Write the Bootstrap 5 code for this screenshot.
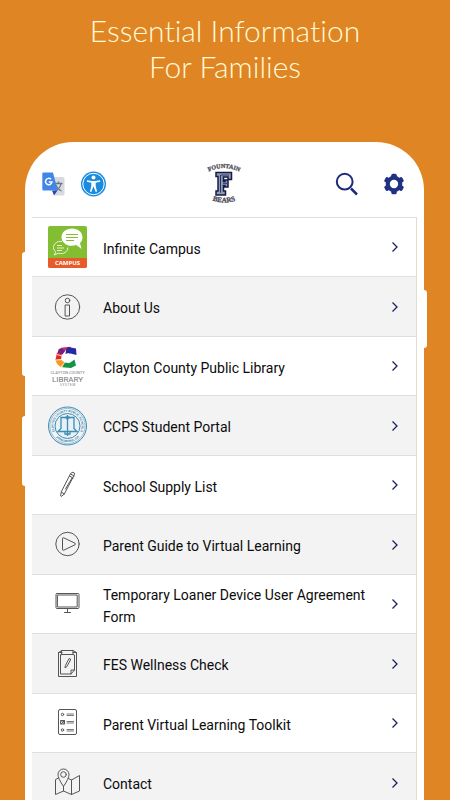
<!DOCTYPE html>
<html lang="en">
<head>
<meta charset="utf-8">
<meta name="viewport" content="width=device-width, initial-scale=1">
<title>Essential Information For Families</title>
<link href="https://cdn.jsdelivr.net/npm/bootstrap@5.3.0/dist/css/bootstrap.min.css" rel="stylesheet">
<style>
  body { background: #e08524; font-family: Roboto, "Liberation Sans", sans-serif; }
  .promo-title { font-family: Lato, "Open Sans", sans-serif; font-weight: 300; font-size: 30px; line-height: 36px; font-variant-ligatures: none; color: #fffbd8; padding: 12px 0 58px; margin: 0; }
  .phone { background: #fff; border-radius: 48px 48px 0 0; margin: 0 26px 0 25px; padding: 0 7px; }
  .side-key { position: absolute; width: 4px; background: #fff; }
  .key-a { left: -3px; top: 110px; height: 124px; border-radius: 3px 0 0 3px; }
  .key-b { left: -3px; top: 274px; height: 70px; border-radius: 3px 0 0 3px; }
  .key-c { right: -3px; top: 148px; height: 58px; border-radius: 0 3px 3px 0; }
  .app-bar { height: 75px; padding: 9px 12px 0 10px; }
  .app-bar .btn { line-height: 0; }
  .menu-list { border-right: 1px solid #e3ddd0; }
  .menu-row { min-height: 59px; padding: 0 17px 0 16px; border-top: 1px solid #dfdfe1; color: #0c0c0c; gap: 16px; font-size: 14px; line-height: 22px; }
  .menu-row:nth-child(even) { background: #f3f3f4; min-height: 60px; }
  .menu-row:hover { color: #0c0c0c; }
  .menu-row .label { padding-top: 3px; }
  .line-art { fill: none; stroke: #555; stroke-width: 1; stroke-linejoin: round; stroke-linecap: round; }
  svg { flex: none; display: block; }
</style>
<script src="https://cdn.jsdelivr.net/npm/bootstrap@5.3.0/dist/js/bootstrap.bundle.min.js"></script>
</head>
<body>
<svg width="0" height="0" class="position-absolute" aria-hidden="true">
  <symbol id="chev" viewBox="0 0 8 12"><path d="M1.500 1.500 6 6 1.500 10.500" fill="none" stroke="#1c2160" stroke-width="1.300"/></symbol>
</svg>
<h1 class="promo-title text-center">Essential Information<br>For Families</h1>
<main class="phone position-relative">
  <span class="side-key key-a"></span><span class="side-key key-b"></span><span class="side-key key-c"></span>
  <header class="app-bar d-flex align-items-center">
    <div class="d-flex align-items-center flex-fill w-50 gap-3">
      <button class="btn p-0 border-0" aria-label="Translate">
        <svg width="23" height="25" viewBox="0 0 23 25"><path d="M8 5h13a1.500 1.500 0 0 1 1.500 1.500V22a1.500 1.500 0 0 1-1.500 1.500h-8z" fill="#d9dadf"/><path d="M12.500 11.500h8M16.500 9.500v2M19 11.500c-.5 3.500-3 6-5.500 7.500M14 13c1 2.500 3 5 5.500 6" fill="none" stroke="#6c7684" stroke-width="1.300"/><path d="M10 18.500h5.500L12 23.500z" fill="#2a45ae"/><path d="M1.500.5H11l4.700 18H1.500A1.300 1.300 0 0 1 .3 17.200V1.700A1.300 1.300 0 0 1 1.500.5z" fill="#4285e8"/><path d="M9 7.300a3.200 3.200 0 1 0 .9 2.700H6.800" fill="none" stroke="#fff" stroke-width="1.500"/></svg>
      </button>
      <button class="btn p-0 border-0" aria-label="Accessibility">
        <svg width="26" height="26" viewBox="0 0 26 26"><circle cx="12.500" cy="13" r="12.500" fill="#1b8be0"/><circle cx="12.500" cy="13" r="10.700" fill="none" stroke="#fff" stroke-width="1"/><circle cx="12.500" cy="6.500" r="2" fill="#fff"/><path d="M6 9.200 11 10h3l5-.8.2 1.500-4.500 1v3.500l1.400 5.300-1.400.4-2-5.200h-.4l-2 5.200-1.400-.4 1.400-5.300v-3.500l-4.500-1z" fill="#fff"/></svg>
      </button>
    </div>
    <svg width="36" height="42" viewBox="0 0 36 42" role="img" aria-label="Fountain Bears">
      <path id="arcTop" d="M2 9Q18 1 34 9" fill="none"/><path id="arcBot" d="M5 37Q18 42 31 37" fill="none"/>
      <g font-family="Liberation Serif, serif" font-weight="700" fill="#4b4d54" text-anchor="middle" stroke="#4b4d54" stroke-width=".3"><text font-size="6"><textPath href="#arcTop" startOffset="50%">FOUNTAIN</textPath></text><text font-size="7"><textPath href="#arcBot" startOffset="50%">BEARS</textPath></text></g>
      <path d="M10 9.500h15.500v7h-3.500v-2.500h-4.500v4.500h1.500v-1.500h3v7h-3V22.500h-1.500v5.500h2v4H10v-4h2V13.500h-2z" fill="#929cae" stroke="#171b46" stroke-width="1.500"/><path d="M14.500 12V29.500M15 12h8M17 20.300h4" stroke="#243473" stroke-width="1" fill="none"/>
    </svg>
    <div class="d-flex align-items-center justify-content-end flex-fill w-50">
      <button class="btn p-0 border-0 me-4" aria-label="Search">
        <svg width="24" height="24" viewBox="0 0 24 24"><circle cx="9.700" cy="9.700" r="7.900" fill="none" stroke="#1c2a78" stroke-width="2"/><path d="m16 16.500 6 6" stroke="#1c2a78" stroke-width="2.500"/></svg>
      </button>
      <button class="btn p-0 border-0" aria-label="Settings">
        <svg width="22" height="22" viewBox="0 0 22 22"><g fill="#1f3180"><circle cx="11" cy="11" r="8.300"/><g id="teeth"><rect x="8.300" y=".7" width="5.400" height="20.600" rx="1.500"/><rect x="8.300" y=".7" width="5.400" height="20.600" rx="1.500" transform="rotate(60 11 11)"/><rect x="8.300" y=".7" width="5.400" height="20.600" rx="1.500" transform="rotate(120 11 11)"/></g></g><circle cx="11" cy="11" r="4.200" fill="#fff"/></svg>
      </button>
    </div>
  </header>
  <nav class="menu-list" aria-label="Information">
    <a href="#" class="menu-row d-flex align-items-center text-decoration-none">
      <svg width="39" height="42" viewBox="0 0 39 42"><rect width="39" height="42" rx="2" fill="#82bd32"/><path d="M0 32h39v8a2 2 0 0 1-2 2H2a2 2 0 0 1-2-2z" fill="#e65b28"/><path d="M14 15.500c-4.500-.8-8.500 2.300-8.500 6 0 2 1 3.500 2.300 4.500L6 29l4.500-1.800c5 1.500 9.500-1.500 9.300-5.700" fill="none" stroke="#e9f4d4" stroke-width="1"/><path d="M9 19.500h5M9 22h7M9 24.500h5" stroke="#e9f4d4"/><path d="M24 2.500c-6 0-10.500 3.900-10.500 8.700s4.500 8.600 10.500 8.600c1.500 0 3-.2 4.200-.7l5.500 3.900-1.800-5.900c1.700-1.600 2.600-3.600 2.600-5.900 0-4.800-4.500-8.700-10.500-8.700z" fill="#fff"/><path d="M18 8.500h12M18 11.500h12M18 14.500h8" stroke="#82bd32" stroke-width="1"/><text x="19.500" y="39" font-family="Open Sans, sans-serif" font-weight="700" font-size="6" fill="#fff" text-anchor="middle">CAMPUS</text></svg>
      <span class="label flex-fill">Infinite Campus</span><svg width="8" height="12"><use href="#chev"/></svg>
    </a>
    <a href="#" class="menu-row d-flex align-items-center text-decoration-none">
      <svg class="line-art" width="39" height="40" viewBox="0 0 39 40"><circle cx="19.500" cy="20" r="12.200"/><circle cx="19.500" cy="13.500" r="2.300"/><rect x="17.500" y="18" width="4" height="11"/></svg>
      <span class="label flex-fill">About Us</span><svg width="8" height="12"><use href="#chev"/></svg>
    </a>
    <a href="#" class="menu-row d-flex align-items-center text-decoration-none">
      <svg width="39" height="40" viewBox="0 0 39 40"><path d="M10.500 3.500 14 1.500l3.500 3-3 4-5-1z" fill="#7b1c80"/><path d="m14.500 1.500 8-.7 1 3.200h-8z" fill="#c9305c"/><path d="m20 1 8 1.500.5 6.500-6-1.500-5 .5.500-4z" fill="#242aa5"/><path d="m9 6.500 5 2-1 5-5.500.5z" fill="#e32526"/><path d="m7.500 14 5.500-.5 4 3.500-3 4.500q-5-2-6.500-7.500z" fill="#f59a1d"/><path d="m16.500 16.500 5 .5 5-3.500 1.500 6-5 2.500-8.500-.7z" fill="#159447"/><path d="M21 7.500q-5.500.5-5.500 4.700 1 4 5.500 4.300M9 8.500l5 1.500M8 14l7-.5M13 21l4-5" fill="none" stroke="#fff" stroke-width=".8"/><g font-family="Roboto, sans-serif" text-anchor="middle" fill="#77777b"><text x="19.500" y="27.500" font-size="4">CLAYTON COUNTY</text><text x="19.500" y="35.500" font-size="8">LIBRARY</text><text x="19.500" y="39.500" font-size="3">S Y S T E M</text></g></svg>
      <span class="label flex-fill">Clayton County Public Library</span><svg width="8" height="12"><use href="#chev"/></svg>
    </a>
    <a href="#" class="menu-row d-flex align-items-center text-decoration-none">
      <svg width="39" height="42" viewBox="0 0 39 42"><g fill="none" stroke="#3c8cb5"><circle cx="19.500" cy="21" r="19" stroke-width="1"/><circle cx="19.500" cy="21" r="17.600" stroke-width=".5"/><circle cx="19.500" cy="21" r="12.500" fill="#e7f1f5"/><path d="M13 12.500h4a3 3 0 0 1 2.500 2 3 3 0 0 1 2.500-2h4v11l3 3H10l3-3zM19.500 10v21M17.500 12h4M17 26v3h5v-3" stroke-width="1.300"/></g><path id="sealTop" d="M8.800 30A14 14 0 1 1 30.200 30" fill="none"/><path id="sealBot" d="M5.500 29A16.200 16.200 0 0 0 33.500 29" fill="none"/><g font-family="Liberation Sans, sans-serif" font-size="3" font-weight="700" fill="#2b7da9" text-anchor="middle"><text><textPath href="#sealTop" startOffset="50%">CLAYTON COUNTY PUBLIC SCHOOLS</textPath></text><text><textPath href="#sealBot" startOffset="50%">JONESBORO, GA</textPath></text></g></svg>
      <span class="label flex-fill">CCPS Student Portal</span><svg width="8" height="12"><use href="#chev"/></svg>
    </a>
    <a href="#" class="menu-row d-flex align-items-center text-decoration-none">
      <svg class="line-art" width="39" height="40" viewBox="0 0 39 40"><path d="m22.500 9 1-1.300q1.500-1 2.700.2.800 1-.2 2.600L16.300 29l-3 2.500-.7-.5.700-4zM22.500 9l3.500 2M21.500 11l3.500 2M13.300 27l3 2M24 13l-6.500 11"/></svg>
      <span class="label flex-fill">School Supply List</span><svg width="8" height="12"><use href="#chev"/></svg>
    </a>
    <a href="#" class="menu-row d-flex align-items-center text-decoration-none">
      <svg class="line-art" width="39" height="40" viewBox="0 0 39 40"><circle cx="19.500" cy="19" r="11.700"/><path d="M14.500 13.500q0-1.200 1.200-.7l11.300 5.400q1 .8 0 1.600l-11.300 5.400q-1.200.5-1.200-.7z"/></svg>
      <span class="label flex-fill">Parent Guide to Virtual Learning</span><svg width="8" height="12"><use href="#chev"/></svg>
    </a>
    <a href="#" class="menu-row d-flex align-items-center text-decoration-none">
      <svg class="line-art" width="39" height="40" viewBox="0 0 39 40"><rect x="8" y="9.500" width="23" height="15" rx="1"/><rect x="9.800" y="11" width="19.400" height="12"/><path d="M19.500 24.500v4M16.500 28.500h6"/></svg>
      <span class="label flex-fill">Temporary Loaner Device User Agreement Form</span><svg width="8" height="12"><use href="#chev"/></svg>
    </a>
    <a href="#" class="menu-row d-flex align-items-center text-decoration-none">
      <svg class="line-art" width="39" height="40" viewBox="0 0 39 40"><path d="M14 8.500h-3.500v24h18v-24H25M14 6.500h11v4H14zM12.500 11l1.500-.5M25 10.500l1.500.5v15l-3.500 4H12.500V11M23 30v-4h3.500M21.500 14.500q1.500 0 1 1.500l-4 7-1.500 1 .3-2z"/><path d="M10.500 8.500 14 6.500M25 6.500l3.500 2"/></svg>
      <span class="label flex-fill">FES Wellness Check</span><svg width="8" height="12"><use href="#chev"/></svg>
    </a>
    <a href="#" class="menu-row d-flex align-items-center text-decoration-none">
      <svg class="line-art" width="39" height="40" viewBox="0 0 39 40"><rect x="10.500" y="6.500" width="18" height="25" rx="1.500"/><circle cx="14.500" cy="11.500" r="1.200"/><circle cx="14.500" cy="27" r="1.200"/><path d="M13 17.500h3.500V21H13zM13 17.500l3.500 3.500M13 21l3.500-3.500"/><path d="M19 11h6.500M19 12.500h6.500M19 18.500h6.500M19 20h6.500M19 26.500h6.500M19 28h6.500" stroke-width=".8"/></svg>
      <span class="label flex-fill">Parent Virtual Learning Toolkit</span><svg width="8" height="12"><use href="#chev"/></svg>
    </a>
    <a href="#" class="menu-row d-flex align-items-center text-decoration-none">
      <svg class="line-art" width="39" height="40" viewBox="0 0 39 40"><path d="M15.500 23.500q-5.500-8-5.500-12a5.500 5.500 0 0 1 11 0q0 4-5.500 12z"/><circle cx="15.500" cy="11.500" r="2.800"/><path d="M10.500 15 7.500 16.500v15l8-3.500 8 3.500 8-3.500V12.500l-8 4.500-3-1.500M23.500 17v14.500M15.500 23.500V28"/></svg>
      <span class="label flex-fill">Contact</span><svg width="8" height="12"><use href="#chev"/></svg>
    </a>
  </nav>
</main>
</body>
</html>
